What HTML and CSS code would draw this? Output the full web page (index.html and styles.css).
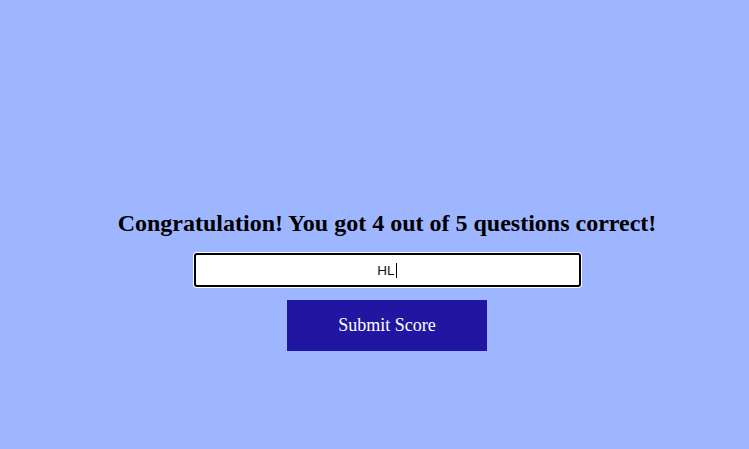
FILE: index.html
```html
<!DOCTYPE html>
<html>
<head>
<meta charset="utf-8">
<link rel="stylesheet" href="styles.css">
</head>
<body>
<main class="result">
  <h2 class="result-title">Congratulation! You got 4 out of 5 questions correct!</h2>
  <div class="name-field"><span class="name-text">HL</span><span class="caret"></span></div>
  <button class="submit-btn">Submit Score</button>
</main>
</body>
</html>
```
FILE: styles.css
```css
html, body {
  margin: 0;
  height: 100%;
}
body {
  background: #9eb5ff;
  font-family: "Liberation Serif", serif;
}
.result {
  display: flex;
  flex-direction: column;
  align-items: center;
  padding: 207px 0 0 25px;
}
.result-title {
  margin: 0;
  font-size: 24px;
  font-weight: bold;
  color: #000;
  line-height: 32px;
}
.name-field {
  margin-top: 14px;
  width: 383px;
  height: 30px;
  border: 2px solid #000;
  border-radius: 3px;
  background: #fff;
  box-shadow: 0 0 0 1px #fff;
  display: flex;
  align-items: center;
  justify-content: center;
  font-family: "Liberation Sans", Arial, sans-serif;
  font-size: 13.5px;
  color: #111;
}
.caret {
  width: 1px;
  height: 15px;
  background: #000;
  margin-left: 1px;
}
.submit-btn {
  margin-top: 13px;
  width: 200px;
  height: 51px;
  border: none;
  background: #2116a2;
  color: #fff;
  font-family: "Liberation Serif", serif;
  font-size: 18px;
}
```
